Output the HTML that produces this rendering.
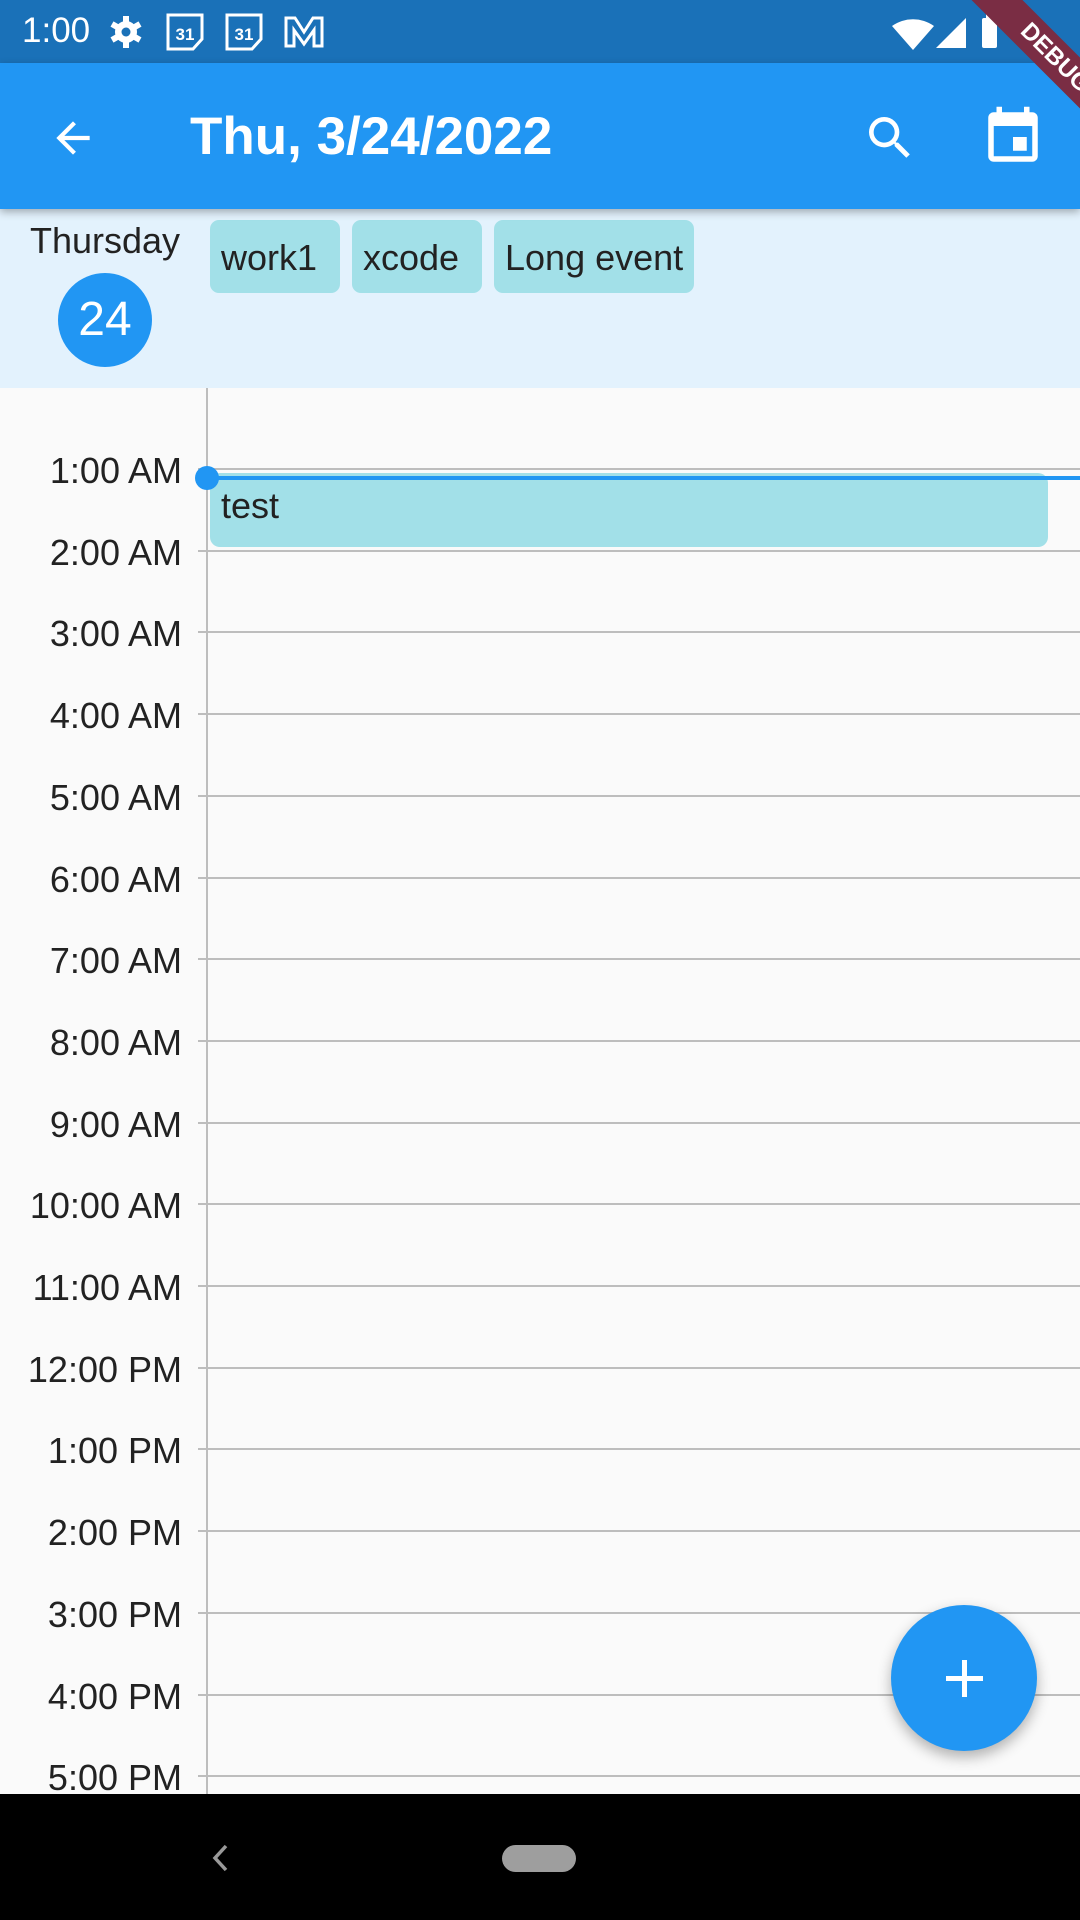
<!DOCTYPE html>
<html><head><meta charset="utf-8"><style>
*{margin:0;padding:0;box-sizing:border-box}
body{width:1080px;height:1920px;position:relative;overflow:hidden;background:#FAFAFA;font-family:"Liberation Sans",sans-serif;}
.abs{position:absolute}
.lbl{position:absolute;right:898px;font-size:36px;color:#222;transform:translateY(-50%);white-space:nowrap;text-align:right;width:200px;left:auto}
.ln{position:absolute;left:198px;right:0;height:2px;background:#BDBDBD}
.chip{position:absolute;top:220px;height:73px;background:#A2E0E8;border-radius:9px;font-size:36px;color:#222;padding-left:11px;line-height:76px;white-space:nowrap}
</style></head><body>
<div class="abs" style="left:0;top:0;width:1080px;height:63px;background:#1A71B8"></div>
<div class="abs" style="left:22px;top:11px;font-size:35px;color:#fff">1:00</div>
<svg class="abs" style="left:108px;top:12px" width="220" height="40" viewBox="0 0 220 40">
<g fill="#fff"><circle cx="18" cy="20" r="11"/><g stroke="#fff" stroke-width="6"><line x1="18" y1="4" x2="18" y2="36"/><line x1="4" y1="12" x2="32" y2="28"/><line x1="4" y1="28" x2="32" y2="12"/></g><circle cx="18" cy="20" r="4.5" fill="#1A71B8"/></g>
<g fill="none" stroke="#fff" stroke-width="3"><path d="M60 3h34v24l-9 10h-25z"/><path d="M119 3h34v24l-9 10h-25z"/><path d="M178 34V6l9 0 9 14 9-14h9v28h-8V18l-10 14-10-14v16z"/></g>
<text x="77" y="28" fill="#fff" font-size="17" font-weight="bold" text-anchor="middle" font-family="Liberation Sans">31</text>
<text x="136" y="28" fill="#fff" font-size="17" font-weight="bold" text-anchor="middle" font-family="Liberation Sans">31</text>
</svg>
<svg class="abs" style="left:890px;top:12px" width="120" height="40" viewBox="0 0 120 40">
<path d="M2 14a36 36 0 0 1 42 0L23 38z" fill="#fff"/><path d="M76 6v30H46z" fill="#fff"/><rect x="92" y="6" width="15" height="30" rx="2" fill="#fff"/><rect x="96" y="2" width="7" height="5" fill="#fff"/>
</svg>
<div class="abs" style="left:0;top:63px;width:1080px;height:146px;background:#2196F3;box-shadow:0 3px 8px rgba(0,0,0,.3);z-index:2"></div>
<svg class="abs" style="left:48px;top:113px;z-index:3" width="50" height="50" viewBox="0 0 24 24"><path d="M20 11H7.83l5.59-5.59L12 4l-8 8 8 8 1.41-1.41L7.83 13H20z" fill="#fff"/></svg>
<div class="abs" style="left:190px;top:106px;font-size:53px;font-weight:bold;color:#fff;z-index:3">Thu, 3/24/2022</div>
<svg class="abs" style="left:862px;top:110px;z-index:3" width="56" height="56" viewBox="0 0 24 24"><path d="M15.5 14h-.79l-.28-.27A6.47 6.47 0 0 0 16 9.5 6.5 6.5 0 1 0 9.5 16c1.61 0 3.09-.59 4.23-1.57l.27.28v.79l5 4.99L20.49 19zm-6 0C7.01 14 5 11.99 5 9.5S7.01 5 9.5 5 14 7.01 14 9.5 11.99 14 9.5 14z" fill="#fff"/></svg>
<svg class="abs" style="left:980px;top:104px;z-index:3" width="66" height="66" viewBox="0 0 24 24"><path d="M17 12h-5v5h5zM16 1v2H8V1H6v2H5c-1.11 0-2 .9-2 2v14a2 2 0 0 0 2 2h14c1.1 0 2-.9 2-2V5c0-1.1-.9-2-2-2h-1V1zm3 18H5V8h14z" fill="#fff"/></svg>
<div class="abs" style="left:0;top:209px;width:1080px;height:179px;background:#E3F2FD"></div>
<div class="abs" style="left:0;top:220px;width:210px;text-align:center;font-size:36px;color:#222">Thursday</div>
<div class="abs" style="left:58px;top:273px;width:94px;height:94px;border-radius:50%;background:#2196F3;color:#fff;font-size:48px;text-align:center;line-height:94px">24</div>
<div class="chip" style="left:210px;width:130px">work1</div>
<div class="chip" style="left:352px;width:130px">xcode</div>
<div class="chip" style="left:494px;width:200px">Long event</div>
<div class="abs" style="left:206px;top:388px;width:2px;height:1406px;background:#BDBDBD"></div>
<div id="tl"></div>
<div class="abs" style="left:210px;top:473px;width:838px;height:74px;background:#A2E0E8;border-radius:10px;font-size:36px;color:#222;padding:12px 0 0 11px">test</div>
<div class="abs" style="left:207px;top:476px;width:873px;height:4px;background:#2196F3"></div>
<div class="abs" style="left:195px;top:466px;width:24px;height:24px;border-radius:50%;background:#2196F3"></div>
<div class="abs" style="left:891px;top:1605px;width:146px;height:146px;border-radius:50%;background:#2196F3;box-shadow:0 6px 14px rgba(0,0,0,.3)"></div>
<div class="abs" style="left:946px;top:1676px;width:37px;height:5px;background:#fff"></div>
<div class="abs" style="left:962px;top:1660px;width:5px;height:37px;background:#fff"></div>
<div class="abs" style="left:0;top:1794px;width:1080px;height:126px;background:#000"></div>
<svg class="abs" style="left:206px;top:1842px" width="30" height="32" viewBox="0 0 30 32"><path d="M20 4L9 16l11 12" stroke="#999" stroke-width="3.5" fill="none"/></svg>
<div class="abs" style="left:502px;top:1845px;width:74px;height:27px;border-radius:14px;background:#9E9E9E"></div>
<div class="abs" style="left:925px;top:40px;width:260px;height:36px;background:#7A2D44;transform:rotate(45deg);color:#fff;font-weight:bold;font-size:24px;text-align:center;line-height:36px;z-index:5">DEBUG</div>
<script>
var labels=["1:00 AM","2:00 AM","3:00 AM","4:00 AM","5:00 AM","6:00 AM","7:00 AM","8:00 AM","9:00 AM","10:00 AM","11:00 AM","12:00 PM","1:00 PM","2:00 PM","3:00 PM","4:00 PM","5:00 PM"];
var h="";labels.forEach(function(l,i){var y=469+i*81.7;h+='<div class="ln" style="top:'+(y-1)+'px"></div><div class="lbl" style="top:'+(y+2)+'px">'+l+'</div>';});
document.getElementById("tl").innerHTML=h;
</script>
</body></html>
